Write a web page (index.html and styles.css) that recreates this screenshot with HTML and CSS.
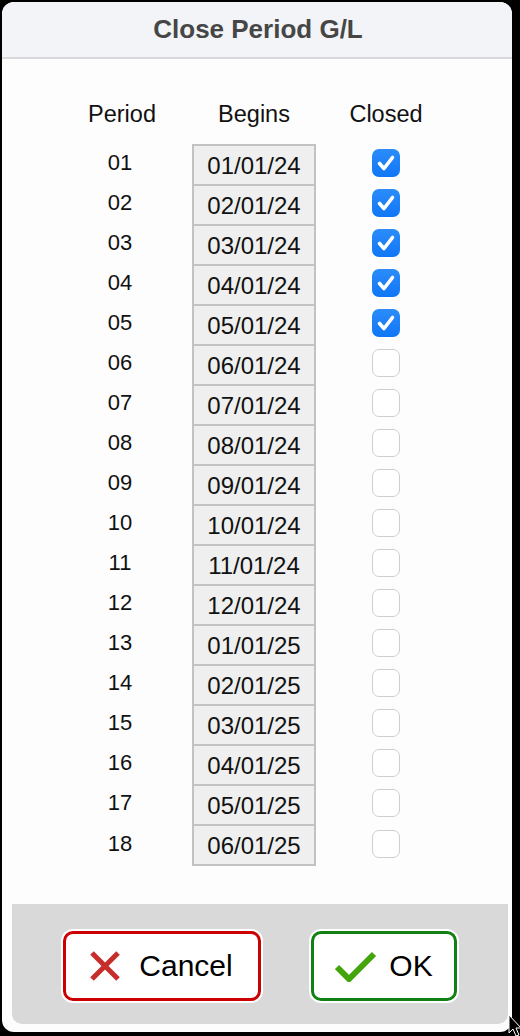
FILE: index.html
```html
<!DOCTYPE html>
<html lang="en">
<head>
    <meta charset="UTF-8">
    <title>Close Period G/L</title>
    <link rel="stylesheet" href="styles.css">
</head>
<body>
    <div class="window">
        <div class="titlebar">Close Period G/L</div>
        <div class="content">
            <div class="grid head">
                <div>Period</div>
                <div>Begins</div>
                <div>Closed</div>
            </div>
            <div class="rows">
                <div class="grid row"><div class="num">01</div><div class="date">01/01/24</div><div><span class="box on"><svg viewBox="0 0 28 28"><path d="M7.5 14.5 L12 19.5 L20.5 8.5"/></svg></span></div></div>
                <div class="grid row"><div class="num">02</div><div class="date">02/01/24</div><div><span class="box on"><svg viewBox="0 0 28 28"><path d="M7.5 14.5 L12 19.5 L20.5 8.5"/></svg></span></div></div>
                <div class="grid row"><div class="num">03</div><div class="date">03/01/24</div><div><span class="box on"><svg viewBox="0 0 28 28"><path d="M7.5 14.5 L12 19.5 L20.5 8.5"/></svg></span></div></div>
                <div class="grid row"><div class="num">04</div><div class="date">04/01/24</div><div><span class="box on"><svg viewBox="0 0 28 28"><path d="M7.5 14.5 L12 19.5 L20.5 8.5"/></svg></span></div></div>
                <div class="grid row"><div class="num">05</div><div class="date">05/01/24</div><div><span class="box on"><svg viewBox="0 0 28 28"><path d="M7.5 14.5 L12 19.5 L20.5 8.5"/></svg></span></div></div>
                <div class="grid row"><div class="num">06</div><div class="date">06/01/24</div><div><span class="box"></span></div></div>
                <div class="grid row"><div class="num">07</div><div class="date">07/01/24</div><div><span class="box"></span></div></div>
                <div class="grid row"><div class="num">08</div><div class="date">08/01/24</div><div><span class="box"></span></div></div>
                <div class="grid row"><div class="num">09</div><div class="date">09/01/24</div><div><span class="box"></span></div></div>
                <div class="grid row"><div class="num">10</div><div class="date">10/01/24</div><div><span class="box"></span></div></div>
                <div class="grid row"><div class="num">11</div><div class="date">11/01/24</div><div><span class="box"></span></div></div>
                <div class="grid row"><div class="num">12</div><div class="date">12/01/24</div><div><span class="box"></span></div></div>
                <div class="grid row"><div class="num">13</div><div class="date">01/01/25</div><div><span class="box"></span></div></div>
                <div class="grid row"><div class="num">14</div><div class="date">02/01/25</div><div><span class="box"></span></div></div>
                <div class="grid row"><div class="num">15</div><div class="date">03/01/25</div><div><span class="box"></span></div></div>
                <div class="grid row"><div class="num">16</div><div class="date">04/01/25</div><div><span class="box"></span></div></div>
                <div class="grid row"><div class="num">17</div><div class="date">05/01/25</div><div><span class="box"></span></div></div>
                <div class="grid row"><div class="num">18</div><div class="date">06/01/25</div><div><span class="box"></span></div></div>
            </div>
        </div>
        <div class="footer">
            <button class="btn cancel">
                <svg width="32" height="32" viewBox="0 0 32 32"><path d="M3 3 L29 29 M29 3 L3 29" stroke="#c62d2b" stroke-width="5" fill="none"/></svg>
                <span>Cancel</span>
            </button>
            <button class="btn ok">
                <svg width="42" height="32" viewBox="0 0 42 32"><path d="M2 17 L14 29 L39 4" stroke="#44a40c" stroke-width="6" fill="none"/></svg>
                <span>OK</span>
            </button>
        </div>
    </div>
    <svg class="cursor" width="14" height="24" viewBox="0 0 14 24"><path d="M1 1 L1 19 L5 15 L8 22 L11 21 L8 14 L13 14 Z" fill="#000" stroke="#fff" stroke-width="1"/></svg>
</body>
</html>
```

FILE: styles.css
```css
body {
    margin: 0;
    background: #000;
    font-family: "Liberation Sans", Arial, sans-serif;
    color: #111;
}

.window {
    margin: 2px 8px 0 2px;
    width: 510px;
    height: 1030px;
    background: #fdfdfd;
    border-radius: 12px;
    display: flex;
    flex-direction: column;
    overflow: hidden;
}

.titlebar {
    height: 55px;
    background: #f2f4f7;
    border-bottom: 2px solid #d9d9db;
    display: flex;
    align-items: center;
    justify-content: center;
    font-weight: bold;
    font-size: 26px;
    color: #464646;
    padding-left: 2px;
}

.content {
    padding: 35px 0 0 60px;
    flex: 1;
}

.grid {
    display: grid;
    grid-template-columns: 120px 124px 120px;
    column-gap: 10px;
    align-items: center;
    justify-items: center;
}

.head {
    height: 40px;
    font-size: 23.5px;
    margin-bottom: 10px;
}

.row {
    height: 40px;
}

.num {
    font-size: 22px;
    margin-top: -3px;
    margin-left: -4px;
}

.date {
    width: 124px;
    height: 40px;
    box-sizing: border-box;
    background: #efefef;
    border: 2px solid #c2c2c2;
    border-bottom: none;
    font-size: 24px;
    display: flex;
    align-items: center;
    justify-content: center;
    padding-top: 2px;
}

.row:last-child .date {
    height: 42px;
    border-bottom: 2px solid #c2c2c2;
}

.box {
    display: block;
    width: 28px;
    height: 28px;
    box-sizing: border-box;
    border: 1.5px solid #cfcfcf;
    border-radius: 7px;
    background: #fff;
    margin-top: -2px;
}

.box.on {
    border: none;
    background: linear-gradient(#2c8cfb, #0f76f4);
}

.box svg {
    display: block;
    width: 28px;
    height: 28px;
}

.box path {
    fill: none;
    stroke: #fff;
    stroke-width: 3.6;
    stroke-linecap: round;
    stroke-linejoin: round;
}

.footer {
    margin: 0 4px 8px 10px;
    height: 120px;
    background: #d9d9d9;
    border-radius: 0 0 10px 10px;
    display: flex;
    justify-content: center;
    align-items: flex-start;
    gap: 50px;
    padding-top: 27px;
    box-sizing: border-box;
}

.btn {
    height: 70px;
    background: #fff;
    border-radius: 10px;
    box-shadow: 0 0 0 2px #fff;
    display: flex;
    align-items: center;
    justify-content: center;
    gap: 18px;
    font-family: inherit;
    font-size: 30px;
    color: #000;
    padding: 0;
}

.cancel {
    width: 198px;
    border: 3px solid #cc0000;
}

.ok {
    width: 146px;
    border: 3px solid #128012;
    gap: 12px;
}

.cancel svg {
    margin-left: -2px;
}

.cursor {
    position: absolute;
    left: 508px;
    top: 1014px;
}
```
